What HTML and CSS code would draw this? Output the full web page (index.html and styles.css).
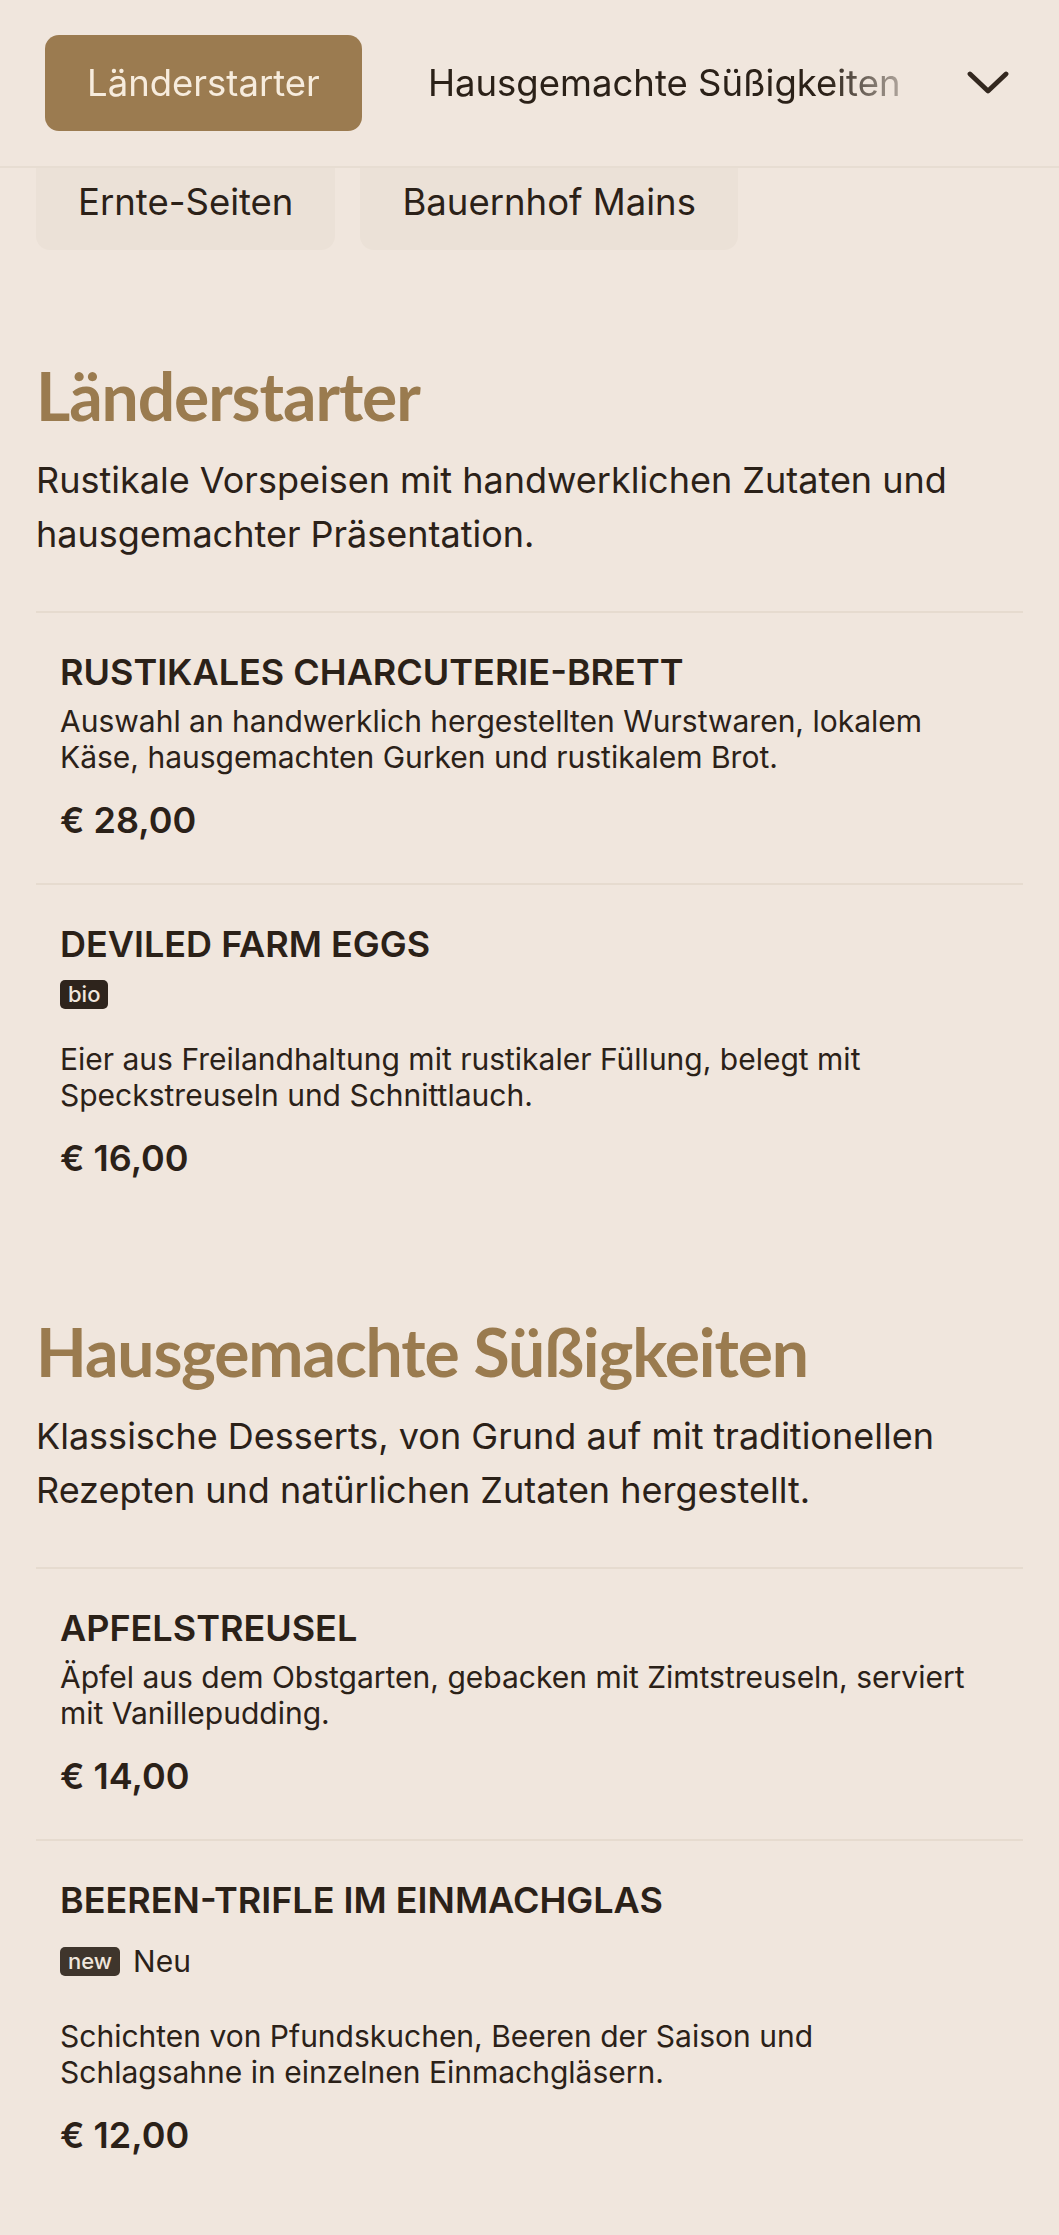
FILE: index.html
```html
<!DOCTYPE html>
<html lang="de">
<head>
<meta charset="utf-8">
<title>Speisekarte</title>
<link rel="stylesheet" href="styles.css">
</head>
<body>
<header class="topbar">
  <nav class="tabs">
    <a class="tab tab-active">Länderstarter</a>
    <a class="tab">Hausgemachte Süßigkeiten</a>
    <a class="tab">Ernte-Seiten</a>
  </nav>
  <button class="toggle" aria-label="Kategorien anzeigen">
    <svg viewBox="0 0 42 24" width="42" height="24"><path d="M3 3 L21 20 L39 3" fill="none" stroke="#33281f" stroke-width="4.8" stroke-linecap="round" stroke-linejoin="round"/></svg>
  </button>
</header>
<div class="chips">
  <span class="chip">Ernte-Seiten</span>
  <span class="chip">Bauernhof Mains</span>
</div>
<main class="menu">
  <section class="menu-section">
    <h2 class="section-title">Länderstarter</h2>
    <p class="section-desc">Rustikale Vorspeisen mit handwerklichen Zutaten und hausgemachter Präsentation.</p>
    <ul class="items">
      <li class="item">
        <h3 class="item-title">RUSTIKALES CHARCUTERIE-BRETT</h3>
        <p class="item-desc">Auswahl an handwerklich hergestellten Wurstwaren, lokalem Käse, hausgemachten Gurken und rustikalem Brot.</p>
        <div class="item-price">€ 28,00</div>
      </li>
      <li class="item">
        <h3 class="item-title">DEVILED FARM EGGS</h3>
        <div class="item-tags"><span class="badge">bio</span></div>
        <p class="item-desc">Eier aus Freilandhaltung mit rustikaler Füllung, belegt mit Speckstreuseln und Schnittlauch.</p>
        <div class="item-price">€ 16,00</div>
      </li>
    </ul>
  </section>
  <section class="menu-section">
    <h2 class="section-title">Hausgemachte Süßigkeiten</h2>
    <p class="section-desc">Klassische Desserts, von Grund auf mit traditionellen Rezepten und natürlichen Zutaten hergestellt.</p>
    <ul class="items">
      <li class="item">
        <h3 class="item-title">APFELSTREUSEL</h3>
        <p class="item-desc">Äpfel aus dem Obstgarten, gebacken mit Zimtstreuseln, serviert mit Vanillepudding.</p>
        <div class="item-price">€ 14,00</div>
      </li>
      <li class="item">
        <h3 class="item-title">BEEREN-TRIFLE IM EINMACHGLAS</h3>
        <div class="item-tags"><span class="badge badge-new">new</span><span class="tag-label">Neu</span></div>
        <p class="item-desc">Schichten von Pfundskuchen, Beeren der Saison und Schlagsahne in einzelnen Einmachgläsern.</p>
        <div class="item-price">€ 12,00</div>
      </li>
    </ul>
  </section>
</main>
</body>
</html>
```
FILE: styles.css
```css
* { box-sizing: border-box; }
html, body { margin: 0; padding: 0; }
body {
  background: #f0e6dd;
  color: #2b2118;
  font-family: Inter, "Noto Sans", "Liberation Sans", sans-serif;
}

.topbar {
  height: 168px;
  display: flex;
  align-items: center;
  padding: 0 50px 0 45px;
  border-bottom: 2px solid #e7ddd2;
  background: #f0e6dd;
}
.tabs {
  flex: 1;
  display: flex;
  gap: 24px;
  overflow: hidden;
  white-space: nowrap;
  -webkit-mask-image: linear-gradient(90deg, #000 calc(100% - 110px), transparent);
  mask-image: linear-gradient(90deg, #000 calc(100% - 110px), transparent);
}
.tab {
  flex: none;
  height: 96px;
  line-height: 96px;
  padding: 0 42px;
  border-radius: 14px;
  font-size: 36.5px;
  font-weight: 400;
  color: #2b2118;
}
.tab-active {
  background: #9b7b50;
  color: #f7ecdd;
}
.toggle {
  flex: none;
  margin-left: 30px;
  width: 42px;
  height: 24px;
  padding: 0;
  border: 0;
  background: none;
  display: flex;
}

.chips {
  display: flex;
  gap: 25px;
  padding: 0 36px;
}
.chip {
  height: 82px;
  padding: 14px 42px 0;
  line-height: 40px;
  font-size: 36.5px;
  background: #ebe1d7;
  border-radius: 0 0 14px 14px;
  color: #2b2118;
}

.menu {
  padding: 15px 36px 40px;
}
.menu-section {
  padding-top: 90px;
}
.section-title {
  margin: 0;
  font-family: Lato, "Open Sans", sans-serif;
  font-weight: 700;
  font-size: 66px;
  line-height: 81px;
  color: #9a7b4f;
  letter-spacing: -1.1px;
}
.section-desc {
  margin: 17px 0 0;
  font-size: 36px;
  line-height: 54px;
  color: #2b2118;
}
.items {
  list-style: none;
  margin: 50px 0 0;
  padding: 0;
}
.item {
  border-top: 2px solid #e6dbcf;
  padding: 38px 24px 42px;
}
.item-title {
  margin: 0;
  font-size: 36px;
  line-height: 42px;
  font-weight: 600;
  color: #2b2118;
}
.item-tags {
  margin-top: 15px;
  margin-bottom: 32px;
  display: flex;
  align-items: center;
  gap: 13px;
}
.badge {
  height: 29px;
  line-height: 29px;
  padding: 0 8px;
  border-radius: 5px;
  font-size: 22px;
  font-weight: 500;
  background: #2e241c;
  color: #f0e6dc;
}
.badge-new {
  background: #3f352c;
}
.tag-label {
  font-size: 30px;
  line-height: 50px;
}
.item-desc {
  margin: 10px 0 0;
  max-width: 916px;
  font-size: 30px;
  line-height: 36px;
  color: #2b2118;
}
.item-price {
  margin-top: 24px;
  font-size: 36px;
  line-height: 42px;
  font-weight: 600;
  color: #2b2118;
}
```
